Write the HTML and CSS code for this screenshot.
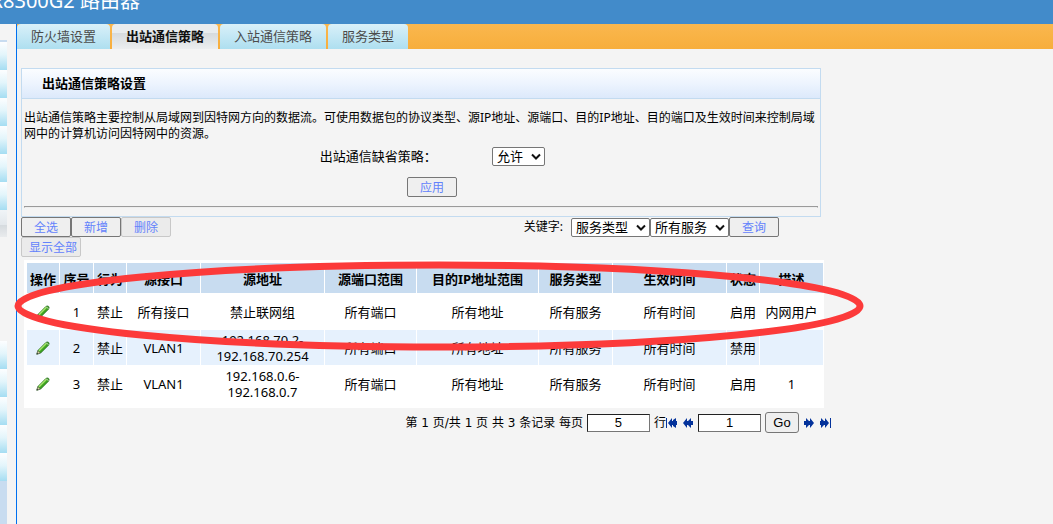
FILE: index.html
```html
<!DOCTYPE html>
<html lang="zh-CN">
<head>
<meta charset="utf-8">
<title>出站通信策略</title>
<link rel="stylesheet" href="styles.css">
</head>
<body>
<header class="banner"><div class="banner-title">R8300G2 路由器</div></header>
<div class="layout">
  <aside class="sidebar">
    <div class="menu menu-top">
      <i class="menu-item"></i><i class="menu-item"></i><i class="menu-item"></i><i class="menu-item"></i><i class="menu-item"></i><i class="menu-item"></i>
      <i class="menu-item current"></i>
    </div>
    <div class="menu menu-bottom">
      <i class="menu-item"></i><i class="menu-item"></i><i class="menu-item"></i><i class="menu-item"></i><i class="menu-item"></i>
    </div>
  </aside>
  <main class="main">
    <nav class="tabs">
      <a class="tab" href="#">防火墙设置</a>
      <a class="tab active" href="#">出站通信策略</a>
      <a class="tab" href="#">入站通信策略</a>
      <a class="tab" href="#">服务类型</a>
    </nav>
    <div class="content">
      <section class="card">
        <h2 class="card-title">出站通信策略设置</h2>
        <div class="card-body">
          <p class="desc">出站通信策略主要控制从局域网到因特网方向的数据流。可使用数据包的协议类型、源IP地址、源端口、目的IP地址、目的端口及生效时间来控制局域网中的计算机访问因特网中的资源。</p>
          <div class="field">
            <label for="policy">出站通信缺省策略：</label>
            <span class="pick"><select id="policy"><option>允许</option></select><svg class="chevron" viewBox="0 0 10 7"><path d="M1 1.5 5 5.5 9 1.5"/></svg></span>
          </div>
          <div class="apply"><button class="btn">应用</button></div>
          <hr class="rule">
        </div>
      </section>
      <section class="list">
        <div class="toolbar">
          <div class="actions">
            <button class="btn">全选</button><button class="btn">新增</button><button class="btn" disabled>删除</button>
            <button class="btn wide" disabled>显示全部</button>
          </div>
          <div class="search">
            <label for="kind">关键字:</label>
            <span class="pick"><select id="kind"><option>服务类型</option></select><svg class="chevron" viewBox="0 0 10 7"><path d="M1 1.5 5 5.5 9 1.5"/></svg></span>
            <span class="pick"><select id="service" aria-label="服务"><option>所有服务</option></select><svg class="chevron" viewBox="0 0 10 7"><path d="M1 1.5 5 5.5 9 1.5"/></svg></span>
            <button class="btn">查询</button>
          </div>
        </div>
        <svg width="0" height="0" class="defs" aria-hidden="true">
          <symbol id="pencil" viewBox="0 0 14 14">
            <path d="M.8 13.2 2 9.4 9.8 1.6Q11 .4 12.6 1.4 13.7 2.8 12.5 4.2L4.7 12z" fill="#3da51f" stroke="#286b22" stroke-width=".8"/>
            <path d="M3 9.7 10.4 2.3" stroke="#a5e26c" stroke-width="1.6"/>
            <path d="M.8 13.2 1.9 9.7 4.3 12.1z" fill="#d8cf9c" stroke="#555" stroke-width=".5"/>
            <path d="M.7 13.3 1.2 11.7 2.3 12.8z" fill="#333"/>
            <path d="M10.2 1.6 12.4 3.8" stroke="#d3d8c8" stroke-width="1"/>
          </symbol>
        </svg>
        <div class="table-box">
          <table class="rules">
            <colgroup><col class="c-s"><col class="c-n"><col class="c-s"><col class="c-if"><col class="c-src"><col class="c-port"><col class="c-dst"><col class="c-if"><col class="c-time"><col class="c-s"><col></colgroup>
            <thead><tr><th>操作</th><th>序号</th><th>行为</th><th>源接口</th><th>源地址</th><th>源端口范围</th><th>目的IP地址范围</th><th>服务类型</th><th>生效时间</th><th>状态</th><th>描述</th></tr></thead>
            <tbody>
              <tr><td><button class="edit" aria-label="编辑"><svg><use href="#pencil"/></svg></button></td><td>1</td><td>禁止</td><td>所有接口</td><td>禁止联网组</td><td>所有端口</td><td>所有地址</td><td>所有服务</td><td>所有时间</td><td>启用</td><td>内网用户</td></tr>
              <tr class="alt"><td><button class="edit" aria-label="编辑"><svg><use href="#pencil"/></svg></button></td><td>2</td><td>禁止</td><td>VLAN1</td><td>192.168.70.2-<br>192.168.70.254</td><td>所有端口</td><td>所有地址</td><td>所有服务</td><td>所有时间</td><td>禁用</td><td></td></tr>
              <tr><td><button class="edit" aria-label="编辑"><svg><use href="#pencil"/></svg></button></td><td>3</td><td>禁止</td><td>VLAN1</td><td>192.168.0.6-<br>192.168.0.7</td><td>所有端口</td><td>所有地址</td><td>所有服务</td><td>所有时间</td><td>启用</td><td>1</td></tr>
            </tbody>
          </table>
        </div>
        <svg class="marker" viewBox="0 0 850 90" aria-hidden="true"><ellipse cx="425" cy="45" rx="421" ry="41"/></svg>
      </section>
      <div class="pager">
        <label for="size">第 1 页/共 1 页 共 3 条记录 每页</label>
        <input id="size" type="text" value="5">
        <span class="unit">行</span>
        <button class="nav" aria-label="首页"><svg viewBox="0 0 12 10"><path d="M0 0h1v10H0zM6 0v3h1V2L10 0v3h1v4h-1v3L7 8V7H6v3L2 5z"/></svg></button>
        <button class="nav prev" aria-label="上一页"><svg viewBox="0 0 12 10"><path d="M5 0v3h1L9 0v3h2v4H9v3L6 7H5v3L1 5z"/></svg></button>
        <input type="text" value="1" aria-label="页码">
        <button class="go">Go</button>
        <button class="nav" aria-label="下一页"><svg viewBox="0 0 12 10"><path d="M7 0v3H6L3 0v3H1v4h2v3l3-3h1v3l4-5z"/></svg></button>
        <button class="nav last" aria-label="末页"><svg viewBox="0 0 12 10"><path d="M12 0h-1v10h1zM6 0v3H5L2 0v3H1v4h1v3l3-3h1v3l4-5z"/></svg></button>
      </div>
    </div>
  </main>
</div>
</body>
</html>
```
FILE: styles.css
```css
* { box-sizing: border-box; }
body {
  margin: 0;
  min-height: 100vh;
  display: flex;
  flex-direction: column;
  overflow: hidden;
  background: #f4f4f4;
  color: #000;
  font: 13px/16px "Noto Sans", "Noto Sans CJK SC", sans-serif;
}
button, input, select { font: inherit; color: inherit; margin: 0; }

.banner {
  height: 24px;
  display: flex;
  align-items: flex-end;
  background: #428bca;
  color: #fff;
  overflow: hidden;
}
.banner-title {
  width: 140px;
  display: flex;
  justify-content: flex-end;
  white-space: nowrap;
  font-size: 20px;
  line-height: 24px;
  padding-bottom: 11px;
}

.layout { flex: 1; display: flex; }
.sidebar {
  width: 16px;
  padding: 16px 9px 0 0;
  display: flex;
  flex-direction: column;
  gap: 104px;
}
.menu-top { border-top: 2px solid #c8dcf0; }
.menu-bottom { flex: 1; background: #c8dcf0; }
.menu-item {
  display: block;
  height: 28px;
  background: linear-gradient(#fdfeff, #e3f5fb 45%, #a5ddf2);
}
.menu-item.current { height: 27px; background: linear-gradient(#f0f4f7, #e3e8ec 54%, #d5dade 55%, #e9ebed); }

.main { flex: 1; min-width: 0; border-left: 1px solid #0070f0; }
.tabs {
  display: flex;
  gap: 2px;
  height: 25px;
  background: linear-gradient(#fab74e, #f7ae3c);
}
.tab {
  padding: 0 14px;
  border-radius: 4px 4px 0 0;
  background: linear-gradient(#d9f0f9, #aedff0);
  color: #4b4b4b;
  line-height: 24px;
  text-decoration: none;
}
.tab.active {
  background: linear-gradient(#e8ecee 34%, #d5dadd 35%, #eceeef);
  color: #111;
  font-weight: bold;
}

.content { padding: 19px 4px 0; }
.card { max-width: 800px; border: 1px solid #c3dbf0; }
.card-title {
  margin: 0;
  padding: 0 20px;
  border-bottom: 1px solid #c3dbf0;
  background: linear-gradient(#fbfdff, #edf4fe 50%, #dce9fb);
  font-size: 13px;
  line-height: 29px;
}
.card-body { padding: 11px 2px 8px; }
.desc { margin: 0; font-size: 12px; }
.field {
  display: grid;
  grid-template-columns: 52% 1fr;
  column-gap: 55px;
  align-items: center;
  height: 20px;
  margin-top: 4px;
}
.field label { text-align: right; }
.field .pick { justify-self: start; }
.apply { display: flex; justify-content: center; margin: 11px 0 9px; padding-left: 22px; }
.rule { margin: 0; height: 2px; border: 1px solid #9a9a9a; border-bottom-color: #eee; }

.btn {
  width: 50px;
  height: 20px;
  padding: 2px 0 0;
  border: 1px solid #767676;
  border-radius: 2px;
  background: #efefef;
  color: #6382fc;
  font-size: 12px;
  line-height: 16px;
}
.btn:disabled { border-color: #c8c8c8; background: #ebebeb; }
.btn.wide { width: 60px; padding-left: 4px; }

.pick { position: relative; display: inline-flex; }
.pick select {
  appearance: none;
  height: 19px;
  padding: 0 20px 0 4px;
  border: 1px solid #767676;
  border-radius: 2px;
  background: #fff;
  line-height: 16px;
}
.chevron {
  position: absolute;
  right: 4px;
  top: 6px;
  width: 10px;
  height: 7px;
  fill: none;
  stroke: #111;
  stroke-width: 2;
  pointer-events: none;
}

.list { position: relative; }
.toolbar { display: flex; max-width: 758px; justify-content: space-between; align-items: flex-start; }
.actions { width: 160px; display: flex; flex-wrap: wrap; }
.search { display: flex; align-items: center; }
.search label { margin-right: 8px; font-size: 12px; }
.defs { display: block; }
.table-box {
  max-width: 800px;
  margin: 3px 0 0 3px;
  padding: 2px 0 6px 2px;
  background: #fff;
}
.rules { width: 100%; table-layout: fixed; border-spacing: 1px; }
.rules th, .rules td { padding: 0; text-align: center; }
.rules th { height: 30px; padding-top: 1px; background: #c8dcf0; white-space: nowrap; }
.rules td { height: 35px; }
.alt td { background: #e6f1fd; }
.c-s { width: 32px; }
.c-n { width: 33px; }
.c-if { width: 73px; }
.c-src { width: 123px; }
.c-port { width: 91px; }
.c-dst { width: 121px; }
.c-time { width: 113px; }
.edit { display: block; margin: 0 auto; padding: 0; border: 0; background: none; }
.edit svg { display: block; width: 14px; height: 14px; }
.marker {
  position: absolute;
  left: -7px;
  top: 44px;
  width: 850px;
  height: 90px;
  fill: none;
  stroke: #fc3a3a;
  stroke-width: 7;
  pointer-events: none;
}

.pager {
  display: flex;
  align-items: center;
  max-width: 810px;
  justify-content: flex-end;
  margin-top: 4px;
  font-family: "DejaVu Sans", "Noto Sans CJK SC", sans-serif;
  font-size: 12px;
}
.pager input {
  width: 63px;
  height: 18px;
  margin: 0 4px;
  padding: 0;
  border: 1px solid #767676;
  border-top-color: #222;
  border-left-color: #222;
  background: #fff;
  text-align: center;
  font-family: "Liberation Sans", sans-serif;
  font-size: 13px;
}
.nav { padding: 0; border: 0; background: none; }
.nav svg { display: block; width: 12px; height: 10px; fill: #03329b; }
.prev { margin-left: 4px; }
.last { margin-left: 4px; }
.go {
  width: 34px;
  height: 21px;
  margin-right: 4px;
  padding: 0;
  border: 1px solid #767676;
  border-radius: 3px;
  background: #efefef;
  font-family: "Liberation Sans", sans-serif;
  font-size: 13px;
}
```
